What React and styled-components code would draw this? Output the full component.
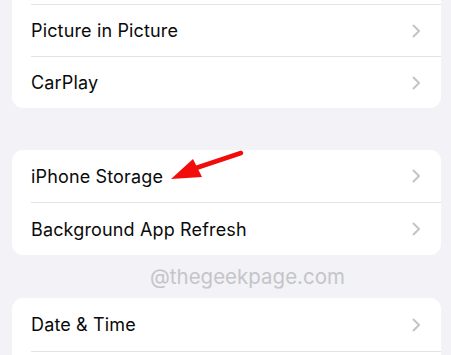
import React from 'react'
import styled, { createGlobalStyle } from 'styled-components'

const Global = createGlobalStyle`
  html, body {
    margin: 0;
    padding: 0;
    background: #f2f2f7;
    overflow: hidden;
  }
  body {
    font-family: Inter, "Liberation Sans", sans-serif;
    -webkit-font-smoothing: antialiased;
  }
`

const Screen = styled.div`
  position: relative;
  width: 451px;
  height: 355px;
  overflow: hidden;
  background: #f2f2f7;
  display: flex;
  flex-direction: column;
  padding: 0 10px 0 12px;
  box-sizing: border-box;
`

const Card = styled.div`
  background: #ffffff;
  border-radius: 11px;
  overflow: hidden;
  margin-top: ${p => p.$top}px;
  flex-shrink: 0;
`

const Row = styled.div`
  display: flex;
  align-items: center;
  height: ${p => p.$h || 52}px;
  margin-left: 19px;
  padding-right: 20px;
  border-top: ${p => (p.$first ? 'none' : '1px solid #e3e3e6')};
  box-sizing: border-box;
`

const Label = styled.span`
  flex: 1;
  font-size: 18px;
  color: #0a0a0a;
  letter-spacing: 0.15px;
`

const Chevron = styled.svg`
  width: 9px;
  height: 14px;
  flex-shrink: 0;
`

const Watermark = styled.div`
  height: 43px;
  display: flex;
  align-items: center;
  justify-content: center;
  font-size: 20.5px;
  color: #c5c5c9;
  padding-left: 42px;
  flex-shrink: 0;
`

const Arrow = styled.svg`
  position: absolute;
  left: 160px;
  top: 145px;
  width: 95px;
  height: 45px;
  pointer-events: none;
`

const Chev = () => (
  <Chevron viewBox="0 0 9 14">
    <path d="M1.5 1.5 L7 7 L1.5 12.5" fill="none" stroke="#c4c4c8" strokeWidth="2" strokeLinecap="round" strokeLinejoin="round" />
  </Chevron>
)

const Item = ({ label, first, h }) => (
  <Row $first={first} $h={h}>
    <Label>{label}</Label>
    {label && <Chev />}
  </Row>
)

export default function App() {
  return (
    <>
      <Global />
      <Screen>
        <Card $top={-48}>
          <Item label="" first />
          <Item label="Picture in Picture" />
          <Item label="CarPlay" />
        </Card>
        <Card $top={42}>
          <Item label="iPhone Storage" first />
          <Item label="Background App Refresh" h={53} />
        </Card>
        <Watermark>@thegeekpage.com</Watermark>
        <Card $top={0}>
          <Item label="Date & Time" first h={53} />
          <Item label="" />
        </Card>
        <Arrow viewBox="160 145 95 45">
          <line x1="241" y1="153" x2="190" y2="170" stroke="#f20d0d" strokeWidth="4.5" strokeLinecap="round" />
          <polygon points="171,179 193,159 202,177" fill="#f20d0d" />
        </Arrow>
      </Screen>
    </>
  )
}
